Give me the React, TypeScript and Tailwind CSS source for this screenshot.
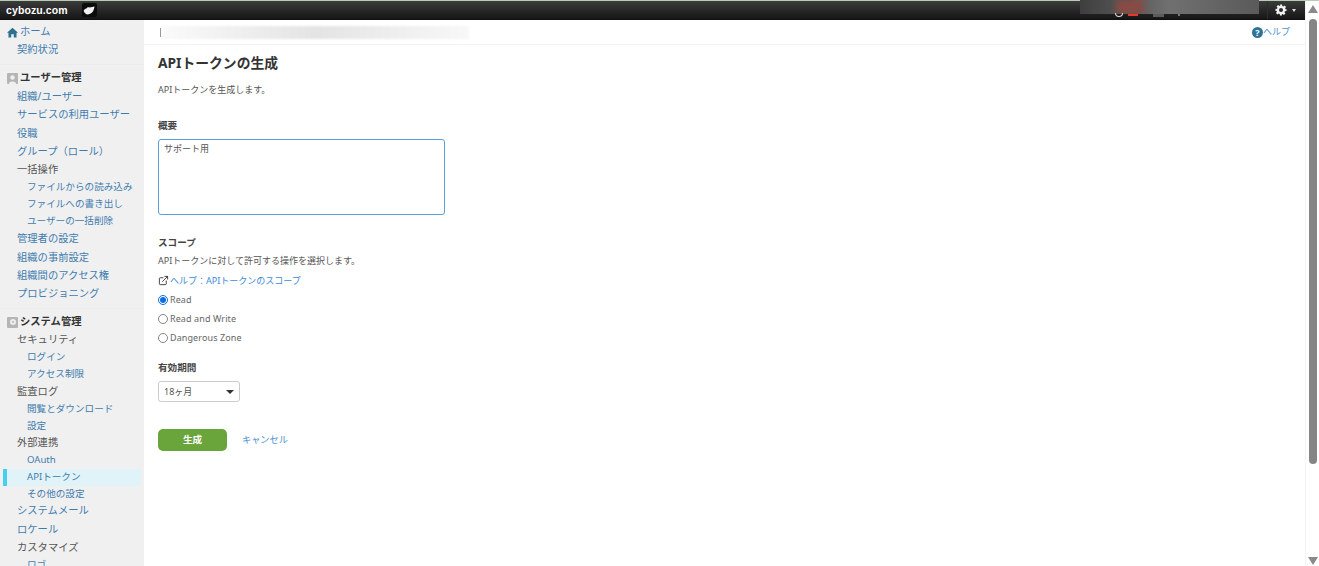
import { ExternalLink } from 'lucide-react'

type NavItem = {
  label: string
  kind: 'top' | 'sub' | 'group' | 'head'
  h: string
  active?: boolean
}

const homeItems: NavItem[] = [
  { label: '契約状況', kind: 'top', h: 'h-[18px]' },
]

const userItems: NavItem[] = [
  { label: '組織/ユーザー', kind: 'top', h: 'h-[19px]' },
  { label: 'サービスの利用ユーザー', kind: 'top', h: 'h-[18px]' },
  { label: '役職', kind: 'top', h: 'h-[19px]' },
  { label: 'グループ\uFF08ロール\uFF09', kind: 'top', h: 'h-[18px]' },
  { label: '一括操作', kind: 'group', h: 'h-[18px]' },
  { label: 'ファイルからの読み込み', kind: 'sub', h: 'h-[17px]' },
  { label: 'ファイルへの書き出し', kind: 'sub', h: 'h-[17px]' },
  { label: 'ユーザーの一括削除', kind: 'sub', h: 'h-[17px]' },
  { label: '管理者の設定', kind: 'top', h: 'h-[18px]' },
  { label: '組織の事前設定', kind: 'top', h: 'h-[19px]' },
  { label: '組織間のアクセス権', kind: 'top', h: 'h-[18px]' },
  { label: 'プロビジョニング', kind: 'top', h: 'h-[18px]' },
]

const systemItems: NavItem[] = [
  { label: 'セキュリティ', kind: 'group', h: 'h-[18px]' },
  { label: 'ログイン', kind: 'sub', h: 'h-[17px]' },
  { label: 'アクセス制限', kind: 'sub', h: 'h-[17px]' },
  { label: '監査ログ', kind: 'group', h: 'h-[18px]' },
  { label: '閲覧とダウンロード', kind: 'sub', h: 'h-[17px]' },
  { label: '設定', kind: 'sub', h: 'h-[16px]' },
  { label: '外部連携', kind: 'group', h: 'h-[18px]' },
  { label: 'OAuth', kind: 'sub', h: 'h-[17px]' },
  { label: 'APIトークン', kind: 'sub', h: 'h-[17px]', active: true },
  { label: 'その他の設定', kind: 'sub', h: 'h-[16px]' },
  { label: 'システムメール', kind: 'top', h: 'h-[18px]' },
  { label: 'ロケール', kind: 'top', h: 'h-[19px]' },
  { label: 'カスタマイズ', kind: 'group', h: 'h-[18px]' },
  { label: 'ロゴ', kind: 'sub', h: 'h-[17px]' },
]

const NavRow = ({ item }: { item: NavItem }) => {
  if (item.kind === 'sub') {
    return (
      <div className={`${item.h} shrink-0 flex items-center ml-[3px] mr-[3px] ${item.active ? 'bg-[#e0f3f8] border-l-[4px] border-[#45d0ef] pl-[20px]' : 'pl-[24px]'}`}>
        <span className="text-[9.6px] text-[#3f7cae] whitespace-nowrap">{item.label}</span>
      </div>
    )
  }
  return (
    <div className={`${item.h} shrink-0 flex items-center pl-[17px]`}>
      <span className={`text-[10.3px] whitespace-nowrap ${item.kind === 'group' ? 'text-[#555555]' : 'text-[#3f7cae]'}`}>{item.label}</span>
    </div>
  )
}

const Sidebar = () => (
  <aside className="w-[144px] shrink-0 bg-[#f0f0f0] flex flex-col overflow-hidden pt-[3px]">
    <div className="h-[18px] shrink-0 flex items-center pl-[7px]">
      <svg width="11" height="11" viewBox="0 0 12 12" className="mr-[2px]">
        <path d="M6 0.8 L12 6.2 L10.4 6.2 L10.4 11.4 L7.4 11.4 L7.4 7.8 L4.6 7.8 L4.6 11.4 L1.6 11.4 L1.6 6.2 L0 6.2 Z" fill="#2f6f8f" />
      </svg>
      <span className="text-[10.3px] text-[#3f7cae]">ホーム</span>
    </div>
    {homeItems.map((item) => <NavRow key={item.label} item={item} />)}
    <div className="h-px bg-[#ebebeb] mt-[5px] mb-[4px] shrink-0" />
    <div className="h-[18px] shrink-0 flex items-center pl-[7px]">
      <span className="w-[11px] h-[11px] bg-[#b5b5b5] mr-[2px] flex items-end justify-center rounded-[1px]">
        <svg width="9" height="10" viewBox="0 0 9 10">
          <circle cx="4.5" cy="3.5" r="2.2" fill="#f0f0f0" />
          <path d="M1 10 C1 6.8 8 6.8 8 10 Z" fill="#f0f0f0" />
        </svg>
      </span>
      <span className="text-[10.3px] font-bold text-[#333333]">ユーザー管理</span>
    </div>
    {userItems.map((item) => <NavRow key={item.label} item={item} />)}
    <div className="h-px bg-[#ebebeb] mt-[5px] mb-[4px] shrink-0" />
    <div className="h-[18px] shrink-0 flex items-center pl-[7px]">
      <span className="w-[11px] h-[11px] bg-[#b5b5b5] mr-[2px] flex items-center justify-center rounded-[1px]">
        <span className="w-[6px] h-[6px] rounded-full border-[2px] border-[#eeeeee]" />
      </span>
      <span className="text-[10.3px] font-bold text-[#333333]">システム管理</span>
    </div>
    {systemItems.map((item) => <NavRow key={item.label} item={item} />)}
  </aside>
)

const Radio = ({ label, checked }: { label: string; checked?: boolean }) => (
  <div className="h-[19px] flex items-center">
    <span className={`w-[10px] h-[10px] rounded-full border mr-[2px] flex items-center justify-center bg-white ${checked ? 'border-[#0a6fe0]' : 'border-[#858585]'}`}>
      {checked && <span className="w-[6px] h-[6px] rounded-full bg-[#0a6fe0]" />}
    </span>
    <span className="text-[9px] text-[#666666] tracking-[0.1px]">{label}</span>
  </div>
)

const App = () => {
  return (
    <div className="w-[1319px] h-[566px] overflow-hidden flex flex-col bg-white font-['Noto_Sans','Noto_Sans_CJK_JP',sans-serif]">
      <header className="h-[20px] shrink-0 flex items-stretch bg-gradient-to-b from-[#3c3c3c] to-[#161616] border-t border-[#b9cdb4] border-b border-b-[#111111] relative">
        <span className="text-white font-['Liberation_Sans',sans-serif] font-bold text-[10.5px] ml-[6px] mt-[2px] tracking-[0.1px]">cybozu.com</span>
        <span className="ml-[14px] mt-[2px] w-[15px] h-[14px] rounded-[2px] bg-[#0c0c0c] flex items-center justify-center">
          <svg width="12" height="9" viewBox="0 0 12 9">
            <path d="M0.6 5 C1 3.4 2.4 2.8 3.4 2.6 C4 1.4 5.6 1 6.6 1.6 C8 1 10 0.8 11.6 0.4 C11.2 1.6 11 2.6 10.8 3.6 C10.2 6 8 8 5 8.4 C3.2 8.6 1.4 7 0.6 5 Z" fill="#f2f2f2" />
          </svg>
        </span>
        <div className="absolute left-[1080px] top-[-1px] w-[179px] h-[14px] bg-gradient-to-r from-[#3e3e3e] via-[#707070] to-[#5a5a5a] overflow-hidden">
          <div className="ml-[36px] w-[28px] h-[14px] bg-[#8a4a42] blur-[3px]" />
        </div>
        <div className="absolute left-[1115px] top-[12px] w-[8px] h-[4px] rounded-b-full border-x border-b border-[#dddddd]" />
        <div className="absolute left-[1128px] top-[13px] w-[10px] h-[2px] bg-[#e8392c]" />
        <div className="absolute left-[1153px] top-[13px] w-[11px] h-[3px] bg-[#5c5c5c]" />
        <div className="absolute left-[1178px] top-[13px] w-[2px] h-[2px] bg-[#777777]" />
        <div className="ml-auto mr-[14px] w-[38px] flex items-center pl-[7px] border-l border-[#2e2e2e]">
          <svg width="12" height="12" viewBox="0 0 24 24" fill="#f2f2f2">
            <path d="M10 1h4l.6 3.2 1.9.8 2.7-1.8 2.8 2.8-1.8 2.7.8 1.9L23 10v4l-3.2.6-.8 1.9 1.8 2.7-2.8 2.8-2.7-1.8-1.9.8L14 23h-4l-.6-3.2-1.9-.8-2.7 1.8L2 18l1.8-2.7-.8-1.9L1 14v-4l3.2-.6.8-1.9L3.2 4.8 6 2l2.7 1.8 1.9-.8L10 1zm2 7a4 4 0 100 8 4 4 0 000-8z" fillRule="evenodd" />
          </svg>
          <span className="ml-[5px] border-x-[2.5px] border-t-[3px] border-x-transparent border-t-[#dddddd]" />
        </div>
      </header>
      <div className="flex-1 flex min-h-0">
        <Sidebar />
        <main className="flex-1 min-w-0 flex flex-col">
          <div className="h-[25px] shrink-0 border-b border-[#f2f2f2] flex items-center pl-[16px]">
            <span className="w-px h-[9px] bg-[#999999] mr-[2px]" />
            <div className="w-[306px] h-[13px] bg-gradient-to-r from-[#fafafa] via-[#e4e4e4] to-[#f8f8f8] blur-[1px]" />
            <div className="ml-auto mr-[15px] flex items-center">
              <span className="w-[11px] h-[11px] rounded-full bg-[#2f7396] text-white text-[9px] font-bold flex items-center justify-center leading-none">?</span>
              <span className="text-[9px] text-[#4a90d0]">ヘルプ</span>
            </div>
          </div>
          <div className="pl-[14px] flex flex-col items-start">
            <h1 className="text-[13.8px] font-bold text-[#333333] mt-[8px] h-[20px] leading-[20px]">APIトークンの生成</h1>
            <p className="text-[9px] text-[#555555] mt-[10px] h-[14px] leading-[14px]">APIトークンを生成します。</p>
            <h2 className="text-[9.6px] font-bold text-[#444444] mt-[22px] h-[14px] leading-[14px]">概要</h2>
            <div className="w-[287px] h-[76px] mt-[6px] border border-[#5a9fdc] rounded-[3px] px-[5px] py-[2px] text-[9px] leading-[14px] text-[#555555]">
              サポート用
            </div>
            <h2 className="text-[9.6px] font-bold text-[#444444] mt-[21px] h-[14px] leading-[14px]">スコープ</h2>
            <p className="text-[9px] text-[#555555] mt-[4px] h-[14px] leading-[14px]">APIトークンに対して許可する操作を選択します。</p>
            <div className="flex items-center mt-[5px] h-[15px]">
              <ExternalLink size={11} strokeWidth={2} className="text-[#333333] mr-px" />
              <span className="text-[9px] text-[#3d8ad6]">{'ヘルプ\uFF1AAPIトークンのスコープ'}</span>
            </div>
            <div className="mt-[2px] flex flex-col">
              <Radio label="Read" checked />
              <Radio label="Read and Write" />
              <Radio label="Dangerous Zone" />
            </div>
            <h2 className="text-[9.6px] font-bold text-[#444444] mt-[14px] h-[14px] leading-[14px]">有効期間</h2>
            <div className="mt-[6px] w-[82px] h-[21px] border border-[#cccccc] rounded-[3px] bg-white flex items-center pl-[5px] pr-[5px]">
              <span className="text-[9px] text-[#555555]">18ヶ月</span>
              <span className="ml-auto border-x-[4px] border-t-[4px] border-x-transparent border-t-[#333333]" />
            </div>
            <div className="flex items-center mt-[27px]">
              <button className="w-[69px] h-[22px] rounded-[5px] bg-[#6aa53c] text-white text-[9.6px] font-bold flex items-center justify-center">生成</button>
              <span className="ml-[15px] text-[9.2px] text-[#4a90d0]">キャンセル</span>
            </div>
          </div>
        </main>
        <div className="w-[14px] shrink-0 bg-white flex flex-col items-center relative -mt-[19px] z-10 border-l border-[#f4f4f4]">
          <span className="mt-[4px] border-x-[5px] border-b-[8px] border-x-transparent border-b-[#8a8a8a]" />
          <span className="mt-[6px] w-[8px] h-[445px] rounded-full bg-[#858585]" />
          <span className="mt-auto mb-[1px] border-x-[5px] border-t-[8px] border-x-transparent border-t-[#8a8a8a]" />
        </div>
      </div>
    </div>
  )
}

export default App
